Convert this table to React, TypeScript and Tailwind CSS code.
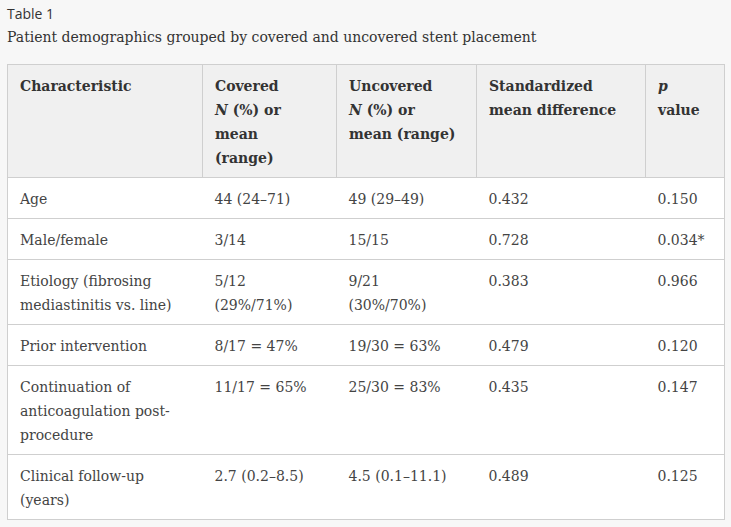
import type { ReactNode } from "react";

const rows: ReactNode[][] = [
  ["Age", "44 (24–71)", "49 (29–49)", "0.432", "0.150"],
  ["Male/female", "3/14", "15/15", "0.728", "0.034*"],
  [
    "Etiology (fibrosing mediastinitis vs. line)",
    "5/12 (29%/71%)",
    <>
      9/21
      <br />
      (30%/70%)
    </>,
    "0.383",
    "0.966",
  ],
  ["Prior intervention", "8/17 = 47%", "19/30 = 63%", "0.479", "0.120"],
  ["Continuation of anticoagulation post-procedure", "11/17 = 65%", "25/30 = 83%", "0.435", "0.147"],
  ["Clinical follow-up (years)", "2.7 (0.2–8.5)", "4.5 (0.1–11.1)", "0.489", "0.125"],
];

const serif = "font-['DejaVu_Serif',Georgia,serif]";
const th = "border border-[#cfcfcf] px-3 pb-[7px] pt-[9px]";

export default function App() {
  return (
    <div className="min-h-[527px] w-[731px] bg-[#f7f7f7] px-[7px] pt-[3px] text-[#333]">
      <div className="font-['Open_Sans','Liberation_Sans',sans-serif] text-[14px] leading-[22px] text-[#333]">
        Table 1
      </div>
      <div className={`${serif} text-[14px] leading-[24px] text-[#333]`}>
        Patient demographics grouped by covered and uncovered stent placement
      </div>
      <table
        className={`mt-[15px] w-[717px] table-fixed border-collapse border border-[#cfcfcf] ${serif} text-[14px] leading-[24px]`}
      >
        <colgroup>
          <col className="w-[195px]" />
          <col className="w-[134px]" />
          <col className="w-[140px]" />
          <col className="w-[169px]" />
          <col className="w-[79px]" />
        </colgroup>
        <thead>
          <tr className="bg-[#f0f0f0] align-top text-left font-bold text-[#333]">
            <th className={th}>Characteristic</th>
            <th className={th}>
              Covered
              <br />
              <i>N</i> (%) or
              <br />
              mean
              <br />
              (range)
            </th>
            <th className={th}>
              Uncovered
              <br />
              <i>N</i> (%) or
              <br />
              mean (range)
            </th>
            <th className={th}>
              Standardized
              <br />
              mean difference
            </th>
            <th className={th}>
              <i>p</i>
              <br />
              value
            </th>
          </tr>
        </thead>
        <tbody className="bg-white text-[#444]">
          {rows.map((r, i) => (
            <tr key={i} className="border-t border-[#cfcfcf] align-top">
              {r.map((c, j) => (
                <td key={j} className="px-3 pb-[7px] pt-[9px]">
                  {c}
                </td>
              ))}
            </tr>
          ))}
        </tbody>
      </table>
    </div>
  );
}
